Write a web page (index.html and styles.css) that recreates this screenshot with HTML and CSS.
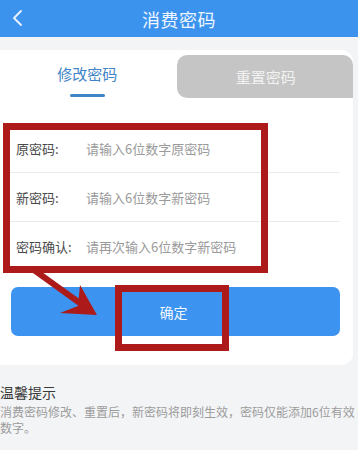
FILE: index.html
```html
<!DOCTYPE html>
<html lang="zh">
<head>
<meta charset="utf-8">
<link rel="stylesheet" href="styles.css">
</head>
<body>
<div class="page">
  <header class="topbar">
    <svg class="back" width="14" height="18" viewBox="0 0 14 18"><path d="M10 2 L3 9 L10 16" fill="none" stroke="#eaf3ff" stroke-width="1.8" stroke-linecap="round" stroke-linejoin="round"/></svg>
    <h1 class="title">消费密码</h1>
  </header>
  <main class="main">
    <section class="card">
      <div class="tabs">
        <div class="tab active">修改密码<span class="underline"></span></div>
        <div class="tab inactive">重置密码</div>
      </div>
      <div class="form">
        <div class="row"><span class="label">原密码:</span><span class="ph">请输入6位数字原密码</span></div>
        <div class="row"><span class="label">新密码:</span><span class="ph">请输入6位数字新密码</span></div>
        <div class="row last"><span class="label">密码确认:</span><span class="ph">请再次输入6位数字新密码</span></div>
      </div>
      <div class="btn">确定</div>
    </section>
    <section class="tips">
      <div class="tips-title">温馨提示</div>
      <p class="tips-text">消费密码修改、重置后，新密码将即刻生效，密码仅能添加6位有效数字。</p>
    </section>
  </main>
  <div class="mark mark-form"></div>
  <div class="mark mark-btn"></div>
  <svg class="arrow" width="80" height="60" viewBox="0 0 80 60">
    <line x1="2" y1="2" x2="52" y2="38" stroke="#ac1a1a" stroke-width="6"/>
    <polygon points="65,47 28,45 46,38 48,17" fill="#ac1a1a"/>
  </svg>
</div>
</body>
</html>
```
FILE: styles.css
```css
* { box-sizing: border-box; }
html, body { margin: 0; padding: 0; }
body {
  width: 358px;
  height: 450px;
  overflow: hidden;
  background: #f3f4f6;
  font-family: "Noto Sans CJK SC", "Noto Sans", sans-serif;
}
.page { position: relative; width: 358px; height: 450px; overflow: hidden; }
.topbar {
  height: 37px;
  background: #3b93ee;
  display: flex;
  align-items: center;
  justify-content: center;
  position: relative;
}
.back { position: absolute; left: 11px; top: 9px; }
.title {
  margin: 0;
  font-size: 18px;
  font-weight: 400;
  color: #eef6ff;
  letter-spacing: 0.5px;
}
.main { padding-top: 13px; }
.card {
  background: #fff;
  margin-right: 5px;
  border-radius: 0 12px 12px 0;
  padding-bottom: 29px;
}
.tabs { display: flex; height: 48px; }
.tab {
  flex: 1;
  display: flex;
  align-items: center;
  justify-content: center;
  font-size: 15px;
  position: relative;
}
.tab.active { color: #3f84c6; padding-bottom: 2px; padding-right: 2px; }
.tab.inactive {
  margin-top: 5px;
  background: #c5c5c5;
  color: #f2f2f2;
  border-radius: 10px 10px 0 10px;
  padding-left: 2px;
}
.underline {
  position: absolute;
  left: 70px;
  bottom: 1px;
  width: 35px;
  height: 3px;
  border-radius: 2px;
  background: #3f84c6;
}
.form { margin: 26px 13px 0 10px; }
.row {
  height: 49px;
  display: flex;
  align-items: center;
  border-bottom: 1px solid #ebebeb;
  font-size: 13px;
}
.row.last { border-bottom: none; }
.label { width: 76px; padding-left: 6px; color: #4a4a4a; }
.ph { color: #9a9a9a; }
.btn {
  margin: 16px 13px 0 11px;
  height: 49px;
  border-radius: 7px;
  background: #3d93f0;
  color: #f0f7ff;
  font-size: 14px;
  display: flex;
  align-items: center;
  justify-content: center;
  padding-right: 4px;
}
.tips { width: 358px; padding-top: 17px; }
.tips-title { font-size: 14px; color: #3a3a3a; line-height: 20px; }
.tips-text { margin: 2px 0 0; font-size: 12px; line-height: 16px; color: #9c9c9c; }
.mark { position: absolute; border: 7px solid #ac1a1a; }
.mark-form { left: 3px; top: 123px; width: 265px; height: 150px; }
.mark-btn { left: 115px; top: 285px; width: 114px; height: 66px; }
.arrow { position: absolute; left: 32px; top: 268px; }
```
